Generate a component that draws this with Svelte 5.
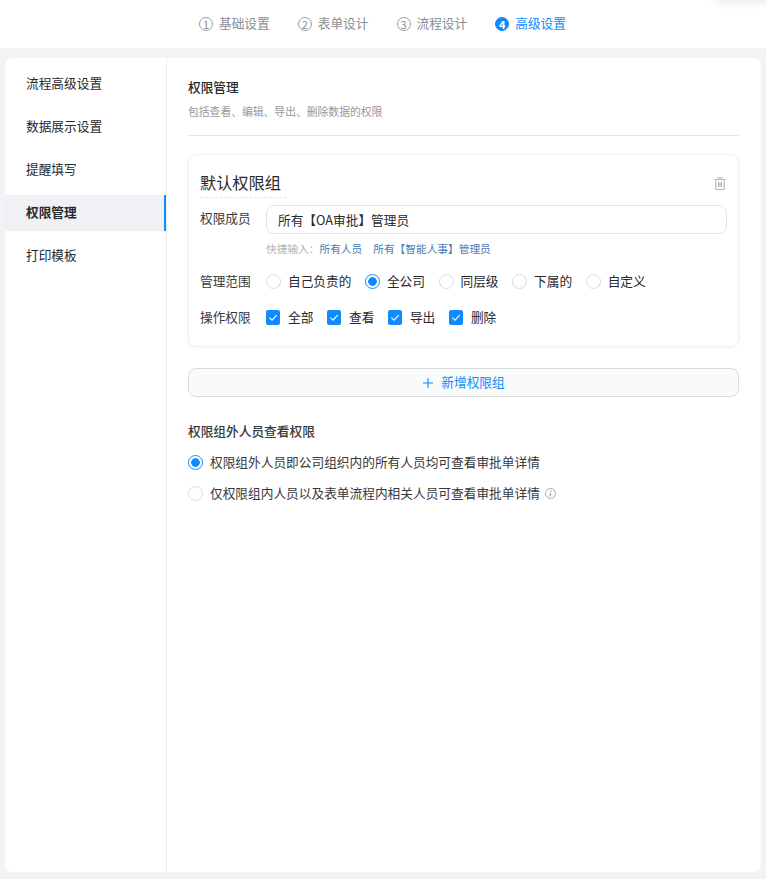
<script>
  const steps = [
    { n: '1', label: '基础设置' },
    { n: '2', label: '表单设计' },
    { n: '3', label: '流程设计' },
    { n: '4', label: '高级设置', active: true }
  ];
  const menu = ['流程高级设置', '数据展示设置', '提醒填写', '权限管理', '打印模板'];
  const scopes = ['自己负责的', '全公司', '同层级', '下属的', '自定义'];
  const ops = ['全部', '查看', '导出', '删除'];
</script>

<div class="page">
  <header class="steps">
    <div class="corner"></div>
    {#each steps as s}
      <div class="step" class:active={s.active}>
        <span class="num">{s.n}</span>
        <span class="txt">{s.label}</span>
      </div>
    {/each}
  </header>

  <div class="panel">
    <nav class="side">
      {#each menu as m, i}
        <div class="item" class:on={i === 3}>{m}</div>
      {/each}
    </nav>

    <main class="main">
      <div class="head">
        <h2>权限管理</h2>
        <p>包括查看、编辑、导出、删除数据的权限</p>
      </div>

      <section class="card">
        <div class="card-top">
          <span class="group-name">默认权限组</span>
          <svg class="trash" width="12" height="13" viewBox="0 0 12 13" fill="none" stroke="#b4b6bb" stroke-width="1.1">
            <path d="M0.5 2.5h11M4 2.5V0.8h4v1.7M1.7 2.5v9c0 .6.3 1 .9 1h6.8c.6 0 .9-.4.9-1v-9" />
            <path d="M4.5 5v5M6 5v5M7.5 5v5" />
          </svg>
        </div>
        <div class="row member">
          <span class="label">权限成员</span>
          <div class="input">所有【OA审批】管理员</div>
        </div>
        <div class="hint">
          <span class="hint-l">快捷输入：</span><span class="link">所有人员</span><span class="link">所有【智能人事】管理员</span>
        </div>
        <div class="row scope">
          <span class="label">管理范围</span>
          <div class="opts radios">
            {#each scopes as s, i}
              <div class="opt">
                <span class="radio" class:sel={i === 1}></span>
                <span class="txt">{s}</span>
              </div>
            {/each}
          </div>
        </div>
        <div class="row ops">
          <span class="label">操作权限</span>
          <div class="opts checks">
            {#each ops as o}
              <div class="opt">
                <span class="check">
                  <svg width="14" height="15" viewBox="0 0 14 15" fill="none" stroke="#fff" stroke-width="1.1">
                    <path d="M3.4 7.6l2.6 2.6 4.7-5" />
                  </svg>
                </span>
                <span class="txt">{o}</span>
              </div>
            {/each}
          </div>
        </div>
      </section>

      <div class="add">
        <svg width="12" height="12" viewBox="0 0 12 12" stroke="#0f8bff" stroke-width="1.1" fill="none">
          <path d="M6 1v10M1 6h10" />
        </svg>
        <span class="txt">新增权限组</span>
      </div>

      <h3>权限组外人员查看权限</h3>
      <div class="line">
        <span class="radio sel"></span>
        <span class="txt">权限组外人员即公司组织内的所有人员均可查看审批单详情</span>
      </div>
      <div class="line">
        <span class="radio"></span>
        <span class="txt">仅权限组内人员以及表单流程内相关人员可查看审批单详情</span>
        <svg class="info" width="11" height="11" viewBox="0 0 11 11" fill="none">
          <circle cx="5.5" cy="5.5" r="5" stroke="#a9abb0" stroke-width="1" />
          <path d="M5.8 2.6v1.1M5.5 4.8L5 8.6" stroke="#9a9ca1" stroke-width="1.2" />
        </svg>
      </div>
    </main>
  </div>
</div>

<style>
  :global(body) {
    margin: 0;
    background: #f2f3f5;
  }
  .page {
    width: 766px;
    height: 879px;
    overflow: hidden;
    font-family: "Noto Sans CJK SC", "Liberation Sans", sans-serif;
    font-size: 12.7px;
    color: #26282c;
    background: #f2f3f5;
  }
  .txt {
    padding-bottom: 2px;
  }
  .steps {
    position: relative;
    height: 48px;
    background: #fff;
    display: flex;
    align-items: center;
    gap: 28px;
    padding-left: 199px;
    overflow: hidden;
    color: #8a8d93;
  }
  .corner {
    position: absolute;
    right: -10px;
    top: -12px;
    width: 62px;
    height: 12px;
    box-shadow: 0 2px 10px rgba(0, 0, 0, 0.09);
  }
  .step {
    display: flex;
    align-items: center;
    gap: 6px;
    line-height: 18px;
  }
  .num {
    box-sizing: border-box;
    width: 14px;
    height: 14px;
    border: 1px solid #9b9da2;
    border-radius: 50%;
    font-size: 11px;
    line-height: 12px;
    text-align: center;
    color: #8a8d93;
  }
  .step.active {
    color: #0f8bff;
  }
  .step.active .num {
    background: #0f8bff;
    border-color: #0f8bff;
    color: #fff;
    font-weight: 700;
  }
  .panel {
    display: flex;
    margin: 10px 5px 0;
    height: 814px;
    background: #fff;
    border-radius: 8px;
    overflow: hidden;
  }
  .side {
    box-sizing: border-box;
    width: 162px;
    flex: none;
    padding-top: 8px;
    border-right: 1px solid #eceef1;
    display: flex;
    flex-direction: column;
    gap: 7px;
  }
  .item {
    height: 36px;
    line-height: 34px;
    padding-left: 21px;
    color: #26282c;
  }
  .item.on {
    background: #f0f1f5;
    border-right: 2px solid #0f8bff;
    font-weight: 700;
  }
  .main {
    flex: 1;
    padding: 0 22px 0 21px;
    min-width: 0;
  }
  .head {
    height: 78px;
    box-sizing: border-box;
    border-bottom: 1px solid #e3e4e7;
    padding-top: 19px;
    margin-bottom: 18px;
  }
  h2 {
    margin: 0;
    font-size: 12.7px;
    font-weight: 500;
    line-height: 20px;
    color: #26282c;
  }
  .head p {
    margin: 6px 0 0;
    font-size: 10.8px;
    line-height: 16px;
    color: #96989d;
  }
  .card {
    box-sizing: border-box;
    height: 193px;
    border: 1px solid #eeeff1;
    border-radius: 8px;
    box-shadow: 0 1px 4px rgba(0, 0, 0, 0.04);
    padding: 0 11px;
  }
  .card-top {
    height: 50px;
    display: flex;
    align-items: center;
    justify-content: space-between;
    padding-top: 7px;
    box-sizing: border-box;
  }
  .group-name {
    font-size: 16.2px;
    line-height: 22px;
    height: 26px;
    box-sizing: content-box;
    border-bottom: 1px dashed #e3e4e7;
    width: 87px;
    white-space: nowrap;
    margin-top: 2px;
  }
  .trash {
    margin-right: 1px;
    margin-top: -1px;
  }
  .row {
    display: flex;
    align-items: center;
  }
  .label {
    width: 66px;
    flex: none;
    color: #36383c;
    padding-bottom: 2px;
  }
  .row.member {
    height: 29px;
    align-items: flex-start;
    line-height: 25px;
  }
  .input {
    box-sizing: border-box;
    flex: 1;
    height: 29px;
    border: 1px solid #e2e3e6;
    border-radius: 8px;
    padding-left: 11px;
    line-height: 27px;
  }
  .hint {
    padding-left: 66px;
    margin-top: 6px;
    font-size: 10.7px;
    line-height: 18px;
  }
  .hint-l {
    color: #b0b2b7;
  }
  .link {
    color: #4a7bb5;
    margin-right: 11px;
  }
  .row.scope {
    margin-top: 11px;
    height: 24px;
  }
  .row.ops {
    margin-top: 12px;
    height: 24px;
  }
  .opts {
    display: flex;
    align-items: center;
  }
  .radios {
    gap: 13.5px;
  }
  .checks {
    gap: 13.6px;
  }
  .opt {
    display: flex;
    align-items: center;
    gap: 8px;
  }
  .radios .opt {
    gap: 7px;
  }
  .radio {
    box-sizing: border-box;
    width: 15px;
    height: 15px;
    flex: none;
    border: 1px solid #dadbde;
    border-radius: 50%;
    background: #fff;
  }
  .radio.sel {
    border-color: #0f8bff;
    background: radial-gradient(circle, #0f8bff 0 4px, #fff 4.6px);
  }
  .check {
    width: 14px;
    height: 15px;
    flex: none;
    border-radius: 2px;
    background: #0f8bff;
    display: flex;
  }
  .add {
    box-sizing: border-box;
    height: 29px;
    margin-top: 21px;
    border: 1px solid #d9dadd;
    border-radius: 8px;
    background: #f9fafa;
    color: #0f8bff;
    display: flex;
    align-items: center;
    justify-content: center;
    gap: 7px;
  }
  h3 {
    margin: 24px 0 0;
    font-size: 12.7px;
    font-weight: 500;
    line-height: 20px;
    color: #36383c;
  }
  .line {
    display: flex;
    align-items: center;
    gap: 7px;
    height: 20px;
    margin-top: 11px;
    color: #36383c;
  }
  .info {
    margin-left: -2px;
  }
</style>
